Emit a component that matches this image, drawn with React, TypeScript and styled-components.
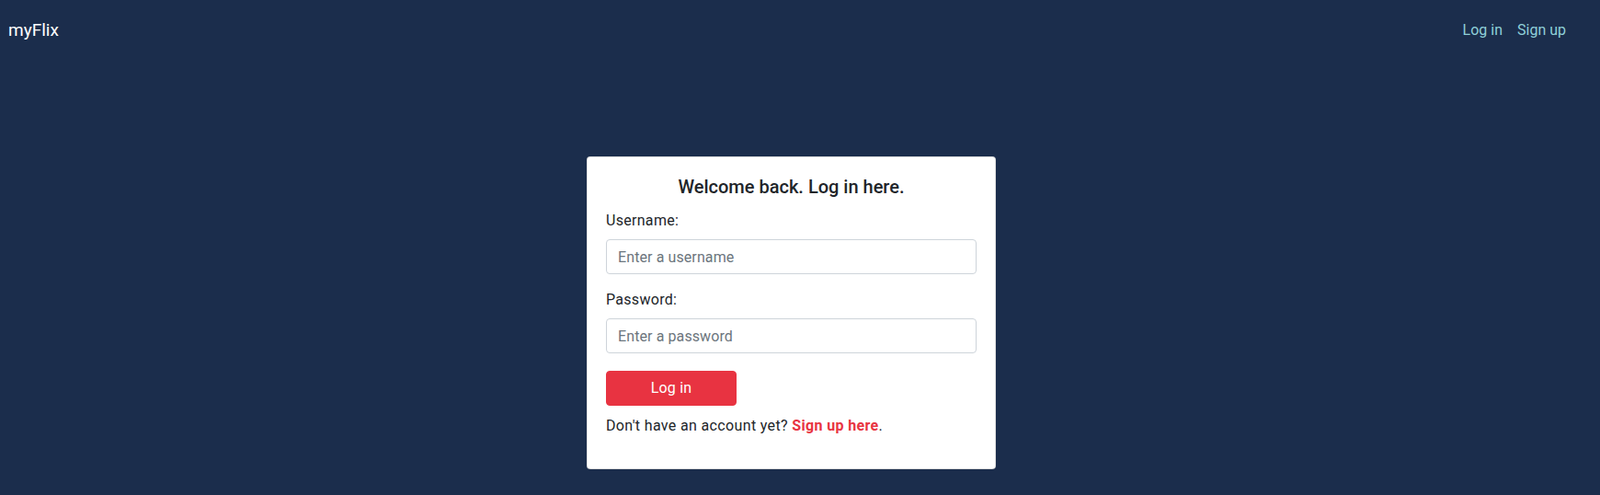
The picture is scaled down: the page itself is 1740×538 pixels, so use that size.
import React from "react";
import styled, { createGlobalStyle } from "styled-components";

const GlobalStyle = createGlobalStyle`
  html, body {
    margin: 0;
    padding: 0;
    background: #1b2d4c;
  }
  body {
    font-family: Roboto, "Noto Sans", "Liberation Sans", sans-serif;
    font-size: 16px;
    line-height: 1.5;
    color: #212529;
  }
  * { box-sizing: border-box; }
`;

const Page = styled.div`
  min-height: 538px;
  background: #1b2d4c;
`;

const NavBar = styled.nav`
  height: 66px;
  display: flex;
  align-items: center;
  justify-content: space-between;
  padding: 0 29px 0 9px;
`;

const Brand = styled.a`
  color: #ffffff;
  font-size: 19px;
  line-height: 30px;
  text-decoration: none;
`;

const NavLinks = styled.div`
  display: flex;
`;

const NavLink = styled.a`
  color: #8fd0d8;
  font-size: 16px;
  line-height: 24px;
  padding: 0 8px;
  text-decoration: none;
`;

const Main = styled.main`
  display: flex;
  justify-content: center;
  padding-top: 104px;
  padding-right: 19px;
`;

const Card = styled.div`
  width: 445px;
  background: #ffffff;
  border: 1px solid rgba(0, 0, 0, 0.125);
  border-radius: 4px;
  padding: 20px;
`;

const Title = styled.h5`
  margin: 0 0 13px;
  font-size: 20px;
  font-weight: 500;
  line-height: 24px;
  text-align: center;
  color: #212529;
`;

const Group = styled.div`
  margin-bottom: 16px;
`;

const Label = styled.label`
  display: block;
  margin-bottom: 8px;
  font-size: 16px;
  line-height: 24px;
  letter-spacing: 0.3px;
`;

const Input = styled.input`
  display: block;
  width: 100%;
  height: 38px;
  padding: 6px 12px;
  font-family: inherit;
  font-size: 16px;
  line-height: 24px;
  letter-spacing: 0.1px;
  color: #495057;
  background: #fff;
  border: 1px solid #ced4da;
  border-radius: 4px;
  outline: none;
  &::placeholder {
    color: #6c757d;
  }
`;

const Button = styled.button`
  display: block;
  width: 142px;
  height: 38px;
  margin-top: 19px;
  background: #e83341;
  color: #fff;
  border: 1px solid #e83341;
  border-radius: 4px;
  font-family: inherit;
  font-size: 16px;
  line-height: 24px;
  letter-spacing: 0.2px;
  cursor: pointer;
`;

const Footer = styled.p`
  margin: 10px 0 14px;
  font-size: 16px;
  line-height: 24px;
  letter-spacing: 0.35px;
`;

const RedLink = styled.a`
  color: #e83341;
  font-weight: 700;
  text-decoration: none;
`;

export default function App() {
  return (
    <Page>
      <GlobalStyle />
      <NavBar>
        <Brand href="#">myFlix</Brand>
        <NavLinks>
          <NavLink href="#">Log in</NavLink>
          <NavLink href="#">Sign up</NavLink>
        </NavLinks>
      </NavBar>
      <Main>
        <Card>
          <Title>Welcome back. Log in here.</Title>
          <Group>
            <Label>Username:</Label>
            <Input type="text" placeholder="Enter a username" />
          </Group>
          <Group>
            <Label>Password:</Label>
            <Input type="password" placeholder="Enter a password" />
          </Group>
          <Button type="submit">Log in</Button>
          <Footer>
            Don't have an account yet? <RedLink href="#">Sign up here</RedLink>.
          </Footer>
        </Card>
      </Main>
    </Page>
  );
}
